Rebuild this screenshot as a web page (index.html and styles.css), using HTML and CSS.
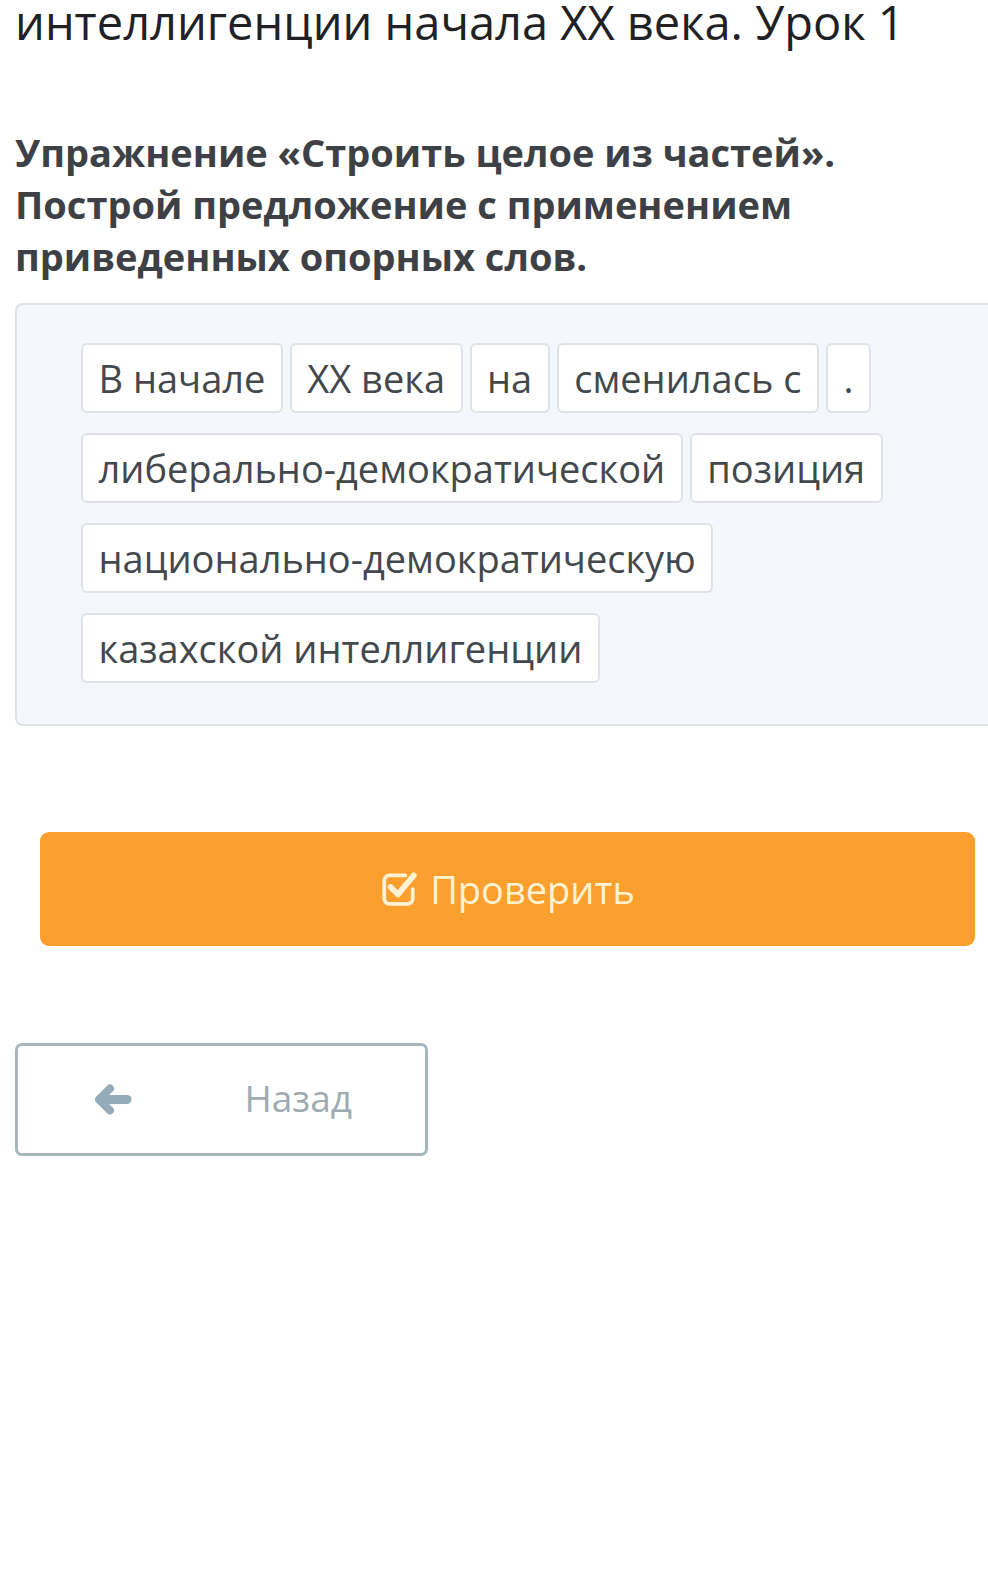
FILE: index.html
```html
<!DOCTYPE html>
<html lang="ru">
<head>
<meta charset="utf-8">
<title>Упражнение</title>
<link rel="stylesheet" href="styles.css">
</head>
<body>
<div class="page">
  <h1 class="lesson-title">интеллигенции начала XX века. Урок 1</h1>
  <h2 class="task">Упражнение «Строить целое из частей». Построй предложение с применением приведенных опорных слов.</h2>
  <div class="panel">
    <div class="chips">
      <span class="chip">В начале</span>
      <span class="chip">XX века</span>
      <span class="chip">на</span>
      <span class="chip">сменилась с</span>
      <span class="chip">.</span>
      <span class="chip">либерально-демократической</span>
      <span class="chip">позиция</span>
      <span class="chip">национально-демократическую</span>
      <span class="chip">казахской интеллигенции</span>
    </div>
  </div>
  <button class="check-btn" type="button">
    <svg class="check-icon" viewBox="0 0 36 36" width="38" height="38" aria-hidden="true">
      <path d="M24 7 H9 a5 5 0 0 0 -5 5 v17 a5 5 0 0 0 5 5 h17 a5 5 0 0 0 5 -5 v-9" fill="none" stroke="currentColor" stroke-width="3.6" stroke-linecap="round"/>
      <polyline points="10,18 17,25 32,7" fill="none" stroke="currentColor" stroke-width="5.5" stroke-linecap="round" stroke-linejoin="round"/>
    </svg>
    <span>Проверить</span>
  </button>
  <button class="back-btn" type="button">
    <svg class="back-icon" viewBox="0 0 38 31" width="38" height="31" aria-hidden="true">
      <line x1="6" y1="15.5" x2="33" y2="15.5" stroke="currentColor" stroke-width="9" stroke-linecap="round"/>
      <polyline points="16,4.5 5,15.5 16,26.5" fill="none" stroke="currentColor" stroke-width="8" stroke-linecap="round" stroke-linejoin="round"/>
    </svg>
    <span>Назад</span>
  </button>
</div>
</body>
</html>
```
FILE: styles.css
```css
html, body {
  margin: 0;
  padding: 0;
  overflow: hidden;
  background: #ffffff;
}
body {
  font-family: "Open Sans", "Noto Sans", sans-serif;
  width: 988px;
  height: 1588px;
}
.page {
  padding-left: 15px;
  display: flex;
  flex-direction: column;
  align-items: flex-start;
}
.lesson-title {
  margin: -6px 0 0 0;
  font-size: 47px;
  font-weight: 400;
  line-height: 56px;
  color: #1f2124;
  white-space: nowrap;
}
.task {
  margin: 76px 0 0 0;
  width: 920px;
  font-size: 38px;
  font-weight: 700;
  line-height: 52px;
  color: #3d4146;
}
.panel {
  margin-top: 21px;
  width: 1010px;
  box-sizing: border-box;
  border: 2px solid #dfe3e7;
  border-right: none;
  border-radius: 8px 0 0 8px;
  background: #f4f8fc;
  padding: 38px 60px 41px 64px;
}
.chips {
  display: flex;
  flex-wrap: wrap;
  column-gap: 7px;
  row-gap: 20px;
  width: 880px;
}
.chip {
  display: flex;
  align-items: center;
  height: 70px;
  box-sizing: border-box;
  padding: 0 15.5px;
  border: 2px solid #dfe2e6;
  border-radius: 6px;
  background: #ffffff;
  font-size: 38px;
  color: #43484d;
  white-space: nowrap;
}
.check-btn {
  margin: 106px 0 0 25px;
  width: 935px;
  height: 114px;
  border: none;
  border-radius: 9px;
  background: #fb9f2e;
  color: #fff2d2;
  font-family: inherit;
  font-size: 38px;
  display: flex;
  align-items: center;
  justify-content: center;
  gap: 12px;
  padding: 0;
}
.check-icon {
  display: block;
  margin-top: -4px;
}
.back-btn {
  margin-top: 97px;
  width: 413px;
  height: 113px;
  box-sizing: border-box;
  border: 3px solid #a7b5bd;
  border-radius: 7px;
  background: #ffffff;
  color: #9eabb3;
  font-family: inherit;
  font-size: 37px;
  display: flex;
  align-items: center;
  justify-content: space-between;
  padding: 0 73px 4px 76px;
}
.back-icon {
  display: block;
  color: #94abba;
  margin-top: 4px;
}
```
